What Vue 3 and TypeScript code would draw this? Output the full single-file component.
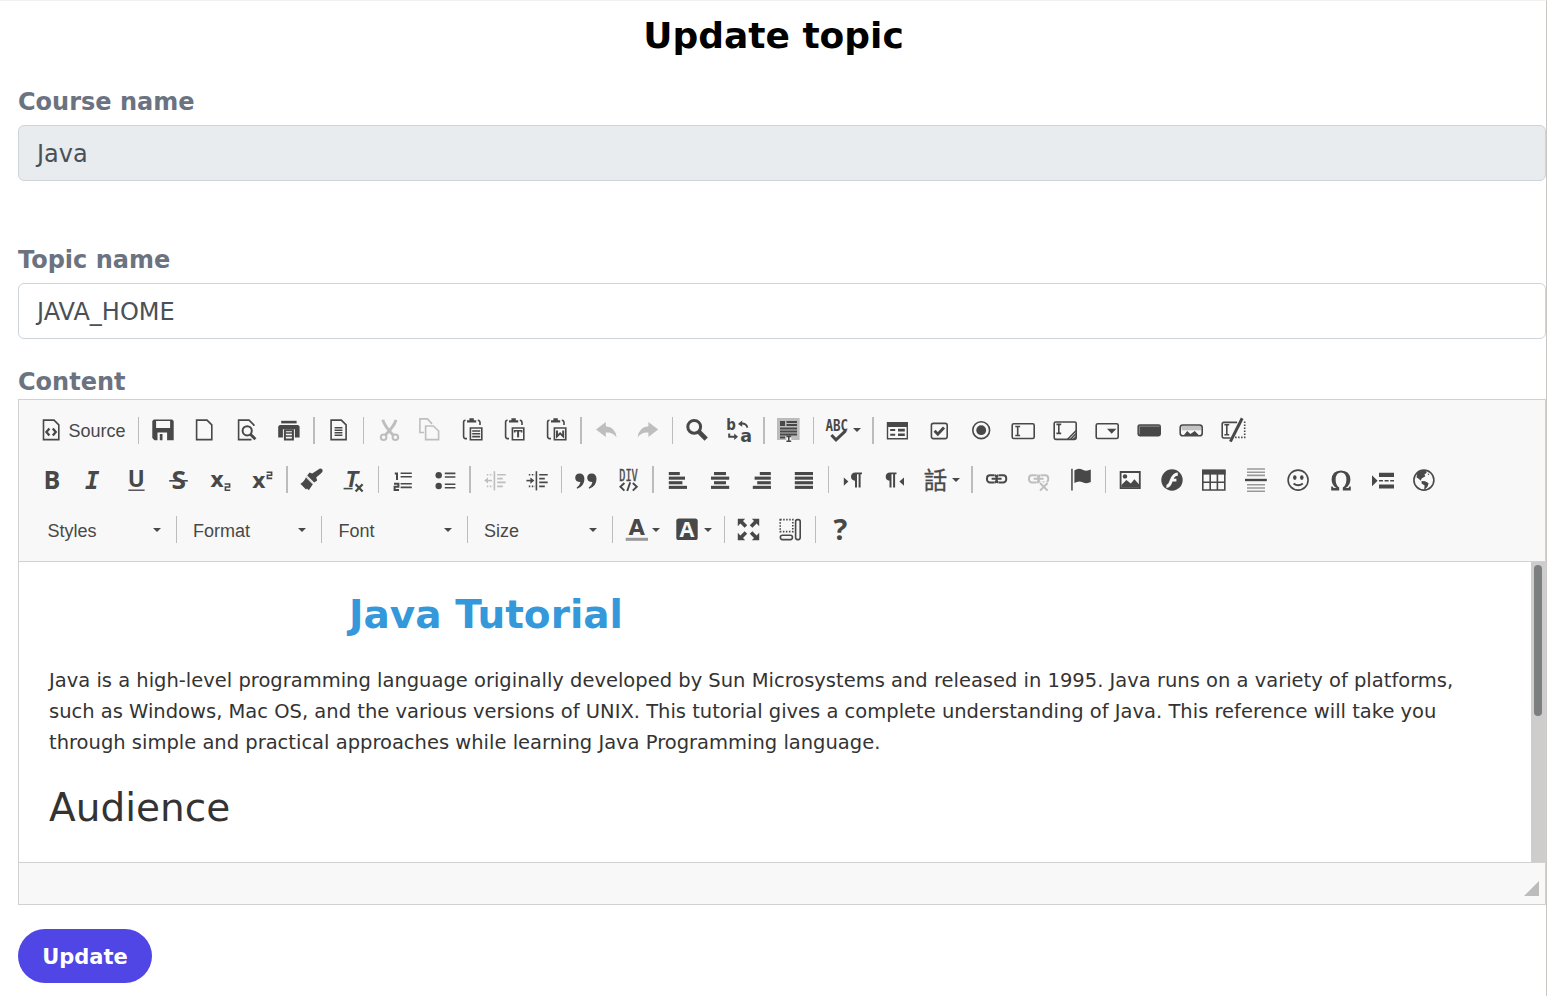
<script setup lang="ts">
import { ref } from 'vue'

interface ToolItem {
  kind: 'button' | 'menu' | 'sep' | 'combo' | 'source'
  icon?: string
  label?: string
  off?: boolean
}

const docShape = '<path class="l" d="M3.5 2.1H14l4.8 4.8V21.6H3.5Z"/>'
const clip =
  '<path d="M7 2.2h2.4V.2h4.4v2h2.4V4.4H7Z"/><path class="l" d="M5.6 2.2Q3.6 2.2 3.6 4.2V18.6Q3.6 20.6 5.6 20.6H7M17.8 2.2Q20 2.4 20 4.6V7"/><path class="l" d="M10.4 10H21.8V21.7H10.4Z"/>'
const linkShape =
  '<path class="l w2" d="M9.5 7.2H5a3 3 0 0 0-3 3v1.2a3 3 0 0 0 3 3H9.5M13.8 7.2h4.4a3 3 0 0 1 3 3v1.2a3 3 0 0 1-3 3h-4.4M6.6 10.8h10M9.8 7.2q2 .4 1.8 3.6M9.8 14.4q2-.4 1.8-3.6M13.4 7.2q-2 .4-1.8 3.6M13.4 14.4q-2-.4-1.8-3.6"/>'
const ibeam = (x: number, y: number, h: number): string =>
  `<path class="l" d="M${x - 2.4} ${y}h4.8M${x} ${y}v${h}M${x - 2.4} ${y + h}h4.8"/>`
const bars = (rows: [number, number][]): string =>
  rows.map(([x, w], i) => `<rect x="${x}" y="${4 + i * 4.6}" width="${w}" height="3.1"/>`).join('')
const indentShape =
  '<path class="l" d="M11.4 3.2V22.4"/><path class="l" d="M14.2 6.8h8.5M14.2 10.6h5.6M14.2 14.4h8.5M14.2 18.4h5.6" /><path class="l" stroke-dasharray="1.5 1.5" d="M3.8 6.8H10M3.8 18.4H10"/>'

const icons: Record<string, string> = {
  source: docShape + '<path class="l" style="stroke-width:2.3" d="M9.4 10.4 6.4 14l3 3.6M12.8 10.4l3 3.6-3 3.6"/>',
  save: '<path fill-rule="evenodd" d="M2.8 1.4H21.2L22.7 3V22.2H3.5L1.3 20V3ZM5.1 3V10H19.1V3ZM6.5 14.6V22.2H8.8V16H11.5v6.2h4.6V14.6Z"/>',
  newpage: '<path class="l" d="M3.6 2.1H14l4.8 4.8V21.6H3.6Z"/>',
  preview:
    '<path class="l" d="M16.5 21.6H3.6V2.1H14l4.8 4.8V8"/><circle class="l w2" cx="12.2" cy="12.8" r="4.6"/><path class="l w3" d="m15.4 16.2 5 5"/>',
  print:
    '<path d="M4.2 2.8H19.6V5.4H4.2Z"/><path fill-rule="evenodd" d="M2.7 7H21.1l1.5 1.5V19.6H17.9V11.2H5.9v8.4H1.2V8.5Z"/><path class="l w2" d="M7.9 12.2h8v9.2h-8Z"/><path class="l" d="M8.4 15h7M8.4 18h7"/>',
  templates:
    '<path class="l" d="M4.1 2.1h10.2l4.8 4.8V21.6H4.1Z"/><path class="l" d="M7.6 9.8h7.8M7.6 12.2h7.8M7.6 14.8h7.8M7.6 17.3h7.8"/>',
  cut: '<path class="l w3" d="M6.8 1.8Q8 7.5 17 17M20 1.8Q18.6 7.5 9.4 17"/><circle class="l w2" cx="7.6" cy="19.2" r="2.8"/><circle class="l w2" cx="19.4" cy="19.2" r="2.8"/>',
  copy: '<path class="l" d="M6 14.5H1.9V.9H9.4l4.6 5"/><path class="l" d="M7.6 8H15.4l5.2 5v8.6H7.6Z"/>',
  paste: clip + '<path class="l" d="M12.2 13h8M12.2 15.8h8M12.2 18.6h8"/>',
  pastetext: clip + '<path class="l" d="M12.6 14.4v-1.6h7v1.6"/><path class="l w2" d="M16.1 12.8v6.6"/>',
  pasteword: clip + '<path class="l w2" d="M13 12.4v6l3.1-3 3.1 3v-6"/>',
  undo: '<path d="M2 11.6 11.8 4V8.3Q21.5 9 22.6 19.6 18.5 13.8 11.8 14.6V19Z"/>',
  redo: '<path d="M22.2 11.6 12.4 4V8.3Q2.7 9 1.6 19.6 5.7 13.8 12.4 14.6V19Z"/>',
  find: '<circle class="l" style="stroke-width:3" cx="9.2" cy="8.8" r="6.4"/><path class="l" style="stroke-width:4.6" d="m13.8 13.6 7.4 7.6"/>',
  replace:
    '<text class="dj b" x="-.8" y="12" font-size="15.5" textLength="9.6" lengthAdjust="spacingAndGlyphs">b</text><text class="dj b" x="13.2" y="23.6" font-size="17.5">a</text><path class="l w2" d="M12.8 5.8Q19.4 4.4 20.4 9.6M2.2 15.4v3.4h7"/><path d="m11 6 4.2-3.4v6.2ZM11 18.8 7.2 15.6v6.4Z"/>',
  selectall:
    '<rect width="22.6" height="22" fill="#bcbcbc"/><path class="l w2" d="M9.5 4h10.5M9.5 7h10.5M3 10.4h17M3 13.4h17M3 16.4h17M3 19.6h5"/><path d="M3 3h5v5H3Z"/><path stroke="#f8f8f8" stroke-width="5" d="M11.8 18v6"/>' +
    ibeam(11.8, 18.4, 4.8),
  spell:
    '<text class="mono b" x="-.6" y="13.3" font-size="15" textLength="22.6" lengthAdjust="spacingAndGlyphs">ABC</text><path class="l" style="stroke-width:3" d="m5.4 17 4.6 4.8L19.8 12.6"/>',
  form: '<path fill-rule="evenodd" d="M.8 4H22V21.4H.8ZM2.2 9V20H20.6V9Z"/><path class="l w2" d="M4.2 12h5M4.2 16.8h5"/><path d="M12 10.8h6.8v2.6H12ZM12 15.4h6.8V18H12Z"/>',
  checkbox:
    '<rect class="l" x="3.4" y="5.4" width="15.8" height="15.2" rx="2"/><path class="l w3" d="m6.6 12.8 3.2 3.4 6.2-6.8"/>',
  radio: '<circle class="l" cx="11.2" cy="12.2" r="8.4"/><circle cx="11.2" cy="12.2" r="4.9"/>',
  textfield: '<rect class="l" x=".2" y="5.7" width="22" height="14.8" rx="1.6"/>' + ibeam(5.7, 8.5, 9),
  textarea:
    '<rect class="l" x=".2" y="4" width="22" height="17.4" rx="1.6"/>' +
    ibeam(4.8, 6.4, 9) +
    '<path class="l" d="m13.6 21.2 8.4-8.4M16.6 21.2l5.4-5.4M19.6 21.2l2.4-2.4"/>',
  select: '<rect class="l" x=".2" y="5.7" width="22" height="14.8" rx="1.6"/><path d="M11 10.8h9.4l-4.7 5Z"/>',
  formbutton:
    '<rect x="-.6" y="6.2" width="23.6" height="12.2" rx="2.4"/><path stroke="#8a8a8a" fill="none" d="M1.4 16.4V8.2H21.6"/>',
  imagebutton:
    '<path fill="#c4c4c4" d="M1.6 8h19.6v4.4H1.6Z"/><rect class="l" x=".2" y="7" width="22" height="10.8" rx="2.6"/><path d="m3.6 17.6 3.6-4.6 3.2 3 4.4-3 4.4 4.6Z"/>',
  hidden:
    '<path class="l" d="M15.1 4.4H1.8q-1.6 0-1.6 1.6V18.4q0 1.6 1.6 1.6H8.6"/>' +
    ibeam(4.8, 6.8, 10) +
    '<path class="l" style="stroke-width:3" d="M20.2.2 8.4 23.6"/><path class="l" stroke-dasharray="1.5 1.5" d="M13.1 19.4h9.6V3.4"/>',
  bold: '<text class="os b" x="3.6" y="21.2" font-size="25">B</text>',
  italic: '<text class="mono b i" x="3.1" y="21" font-size="24">I</text>',
  underline: '<text class="os b" x="3.8" y="19" font-size="22.5">U</text><path d="M4.4 21.5H20.6v1.4H4.4Z"/>',
  strike: '<text class="os b" x="5.6" y="21" font-size="24.5" textLength="14.5" lengthAdjust="spacingAndGlyphs">S</text><path d="M3.2 12H21.8v1.6H3.2Z"/>',
  sub: '<text class="dj b" x="2.2" y="18.8" font-size="22" textLength="13.6" lengthAdjust="spacingAndGlyphs">x</text><path class="l" d="M16.6 16h5v3h-4.2v3.2h4.8"/>',
  sup: '<text class="dj b" x="2" y="20" font-size="22" textLength="13.6" lengthAdjust="spacingAndGlyphs">x</text><path class="l" d="M16.6 4.2h5v3h-4.2v3.2h4.8"/>',
  brush:
    '<path d="M18.4 1.6q2-2.2 4 0 1 1.8-1 3.4l-5.2 4.4 1 3-3 2.2-7-7 2.4-3 2.6 1Z"/><path d="m6.2 8.6 7 7.2-4.4 6.4L7 20.4l-1 1.2L.4 15.8Q4.6 13.6 6.2 8.6Z"/><path d="m5.6 8.8 8 8" stroke="#f8f8f8"/>',
  clear:
    '<text class="mono b i" x="3.2" y="18.6" font-size="21.5" textLength="14" lengthAdjust="spacingAndGlyphs">T</text><path d="M1.6 19.8h9v1.6H1.6Z"/><path class="l" style="stroke-width:2.2" d="m13.6 16.2 7 7.2M20.6 16.2l-7 7.2"/>',
  numbered:
    '<path class="l w2" d="M3.8 5.4H6V12M3 15.8h4.4v3H3.6v3.2h4.4"/><path class="l" d="M9.6 5.2H20.8M9.6 8.8H20.8M9.6 15.8H20.8M9.6 19.4H20.8"/>',
  bulleted:
    '<circle cx="5.7" cy="7.3" r="3.2"/><circle cx="5.7" cy="18" r="3.2"/><path class="l" d="M11.8 5.4H22.4M11.8 9H22.4M11.8 16.2H22.4M11.8 19.8H22.4"/>',
  outdent: indentShape + '<path class="l" d="M3 12.6h6"/><path d="M1.2 12.6 5 9.6v6Z"/>',
  indent: indentShape + '<path class="l" d="M1.4 12.6h6"/><path d="M9.4 12.6 5.4 9.4v6.4Z"/>',
  quote:
    '<path d="M5.6 5.4q4.8 0 4.8 5.6 0 7-7.2 9.8l-.6-1q3.4-2.2 3.8-5.8Q1.2 14 1.2 9.8q0-4.2 4.4-4.4ZM17.6 5.4q4.9 0 4.9 5.6 0 7-7.3 9.8l-.6-1q3.4-2.2 3.8-5.8-5.2 0-5.2-4.2 0-4.2 4.4-4.4Z"/>',
  div: '<text class="mono" x="3.2" y="12.8" font-size="15.5" stroke="#484848" stroke-width=".4" textLength="18.6" lengthAdjust="spacingAndGlyphs">DIV</text><path class="l" style="stroke-width:1.9" d="m8.4 15-4 3.8 4 3.8M16.8 15l4 3.8-4 3.8M14.2 14.4l-3 8.6"/>',
  left: bars([[2.8, 11], [2.8, 16.2], [2.8, 13.6], [2.8, 18.2]]),
  center: bars([[6, 12], [3, 18.2], [6, 12], [3, 18.2]]),
  right: bars([[9.8, 11], [4.6, 16.2], [7.2, 13.6], [2.8, 18.2]]),
  justify: bars([[2.8, 18.2], [2.8, 18.2], [2.8, 18.2], [2.8, 18.2]]),
  ltr: '<path d="M2.8 9.4 7.4 13.6 2.8 17.8Z"/><path d="M14.4 4.6H21V6.2H19.6V19.6H17.6V6.2H16V19.6H14V12.8Q10 12.4 10 8.8 10 4.8 14.4 4.6Z"/>',
  rtl: '<path d="M21 9.4 16.4 13.6 21 17.8Z"/><path d="M7.1 4.6h6.4V6.2h-1.4V19.6h-2V6.2H8.5V19.6h-2V12.8Q2.7 12.4 2.7 8.8 2.7 4.8 7.1 4.6Z"/>',
  lang: '<text class="cjk" x="-1.2" y="20.6" font-size="23.5" stroke="#484848" stroke-width=".3">話</text>',
  link: linkShape,
  unlink:
    linkShape +
    '<path stroke="#f8f8f8" stroke-width="5" d="m12.6 14.4 8 8M20.6 14.4l-8 8"/><path class="l w2" d="m13 15 7.6 7.6M20.6 15 13 22.6"/>',
  flag: '<path d="M2.2.8h1.5V22.4H2.2ZM5.4 2.4q4-2.8 8.2-.6 4 1.8 8.2-.2V14q-4 2.2-8.2.2-4-1.8-8.2.8Z"/>',
  image:
    '<path class="l" style="stroke-width:1.8" d="M2.6 4H21.8V20.2H2.6Z"/><circle cx="7" cy="8.4" r="2.2"/><path d="M3.4 19.4V17l5-5 4.4 3.6 3.6-4.4 5 5.6v2.6Z"/>',
  flash:
    '<circle cx="12" cy="12" r="10.7"/><path fill="#f8f8f8" d="M17.8 4.5v3.2q-3.2 0-4 3h2.6v2.8h-3.8q-1.8 6-6.2 6.6v-3.2q2-.4 3.4-4.8Q12.4 4.9 17.8 4.5Z"/>',
  table:
    '<path d="M0 1.8H23.6V6.6H0Z"/><path class="l" d="M.8 2.4H22.8V22H.8ZM8.2 6v16M15.4 6v16M.8 14.2h22"/>',
  hr: '<path d="M1 10.8H22.8v2.4H1Z"/><path class="l" style="stroke:#999" d="M3 1H21M3 4.2H21M3 7.4H21M3 16.8H21M3 20H21M3 23.2H21"/>',
  smiley:
    '<circle class="l" cx="12.1" cy="12.1" r="10"/><ellipse cx="8.8" cy="9.6" rx="1.8" ry="2.4"/><ellipse cx="15.8" cy="9.6" rx="1.8" ry="2.4"/><path class="l w2" d="M7.6 15.4q4.6 3.8 9.2 0"/>',
  omega:
    '<path d="M3.2 22.6V18.4H4.6Q5 20 6.4 20H8.4Q3.6 17 3.6 11.4 4 2.6 13 2.4 22 2.6 22.4 11.4 22.4 17 17.6 20h2q1.4 0 1.8-1.6h1.4v4.2H14.8V19.6q3.6-2.4 3.6-8.2Q18.2 4.6 13 4.4 7.8 4.6 7.6 11.4q0 5.8 3.6 8.2v3Z"/>',
  pagebreak:
    '<path d="M2 7.2 7.6 12.7 2 18.2ZM9 4.8H24V9H9ZM9 16.4H24v4.2H9Z"/><path class="l" stroke-dasharray="4 1.6" d="M9 12.7h15"/>',
  globe:
    '<circle class="l" cx="11.9" cy="12.1" r="10"/><path d="M5 5.6Q8 2.2 13.4 2.6l1.4 2.2-2.4 1.8 1 1.6-3.8 2.4-.8 2.2-2.4-2.4L4.6 9.6ZM15.6 5.2l1.8 1-1.2 1ZM9.6 13l3.6.2 3.4 2-1 3.4-2.6 3-.8-.4.4-3.6-3-2.2Z"/>',
  color:
    '<text class="dj b" x="2.6" y="17.2" font-size="20.5" textLength="16.4" lengthAdjust="spacingAndGlyphs">A</text><path fill="#999" d="M-.3 19.8H22V22.8H-.3Z"/>',
  bgcolor:
    '<rect x="-1.7" y=".6" width="21.4" height="21.4" rx="2.6"/><text class="os b" x="1.6" y="18.6" font-size="21.5" style="fill:#f8f8f8">A</text>',
  maximize:
    '<path d="M.8.8H8.2L6 3l4.2 4.2-2.6 2.6-4.2-4.2L.8 8.2ZM22.2.8H14.8L17 3l-4.2 4.2 2.6 2.6 4.2-4.2 2.6 2.6ZM.8 22.2H8.2L6 20l4.2-4.2-2.6-2.6-4.2 4.2-2.6-2.6ZM22.2 22.2H14.8L17 20l-4.2-4.2 2.6-2.6 4.2 4.2 2.6-2.6Z"/>',
  blocks:
    '<path class="l" stroke-dasharray="1.5 1.5" d="M1.2 1.6H13.8V13.6H1.2Z"/><rect class="l" x="16.6" y="1.6" width="4.6" height="20" rx="2"/><rect class="l" x="1.4" y="17.2" width="12" height="4.4" rx="2"/>',
  about: '<text class="os b" x="4.4" y="22" font-size="29">?</text>'
}

const sep: ToolItem = { kind: 'sep' }
const buttons = (...names: string[]): ToolItem[] => names.map((icon) => ({ kind: 'button', icon }))
const faded = (...names: string[]): ToolItem[] => names.map((icon) => ({ kind: 'button', icon, off: true }))
const menu = (icon: string): ToolItem => ({ kind: 'menu', icon })
const combo = (label: string): ToolItem => ({ kind: 'combo', label })

const rows: ToolItem[][] = [
  [
    { kind: 'source', icon: 'source', label: 'Source' }, sep,
    ...buttons('save', 'newpage', 'preview', 'print'), sep,
    ...buttons('templates'), sep,
    ...faded('cut', 'copy'), ...buttons('paste', 'pastetext', 'pasteword'), sep,
    ...faded('undo', 'redo'), sep,
    ...buttons('find', 'replace'), sep,
    ...buttons('selectall'), sep,
    menu('spell'), sep,
    ...buttons('form', 'checkbox', 'radio', 'textfield', 'textarea', 'select', 'formbutton', 'imagebutton', 'hidden')
  ],
  [
    ...buttons('bold', 'italic', 'underline', 'strike', 'sub', 'sup'), sep,
    ...buttons('brush', 'clear'), sep,
    ...buttons('numbered', 'bulleted'), sep,
    ...faded('outdent'), ...buttons('indent'), sep,
    ...buttons('quote', 'div'), sep,
    ...buttons('left', 'center', 'right', 'justify'), sep,
    ...buttons('ltr', 'rtl'), menu('lang'), sep,
    ...buttons('link'), ...faded('unlink'), ...buttons('flag'), sep,
    ...buttons('image', 'flash', 'table', 'hr', 'smiley', 'omega', 'pagebreak', 'globe')
  ],
  [
    combo('Styles'), sep, combo('Format'), sep, combo('Font'), sep, combo('Size'), sep,
    menu('color'), menu('bgcolor'), sep,
    ...buttons('maximize', 'blocks'), sep,
    ...buttons('about')
  ]
]

const course = ref('Java')
const topic = ref('JAVA_HOME')
</script>

<template>
  <main class="page">
    <h1 class="title">Update topic</h1>
    <form class="form" @submit.prevent>
      <label class="label" for="course">Course name</label>
      <input id="course" v-model="course" class="field disabled" type="text" disabled />
      <label class="label second" for="topic">Topic name</label>
      <input id="topic" v-model="topic" class="field" type="text" />
      <div class="label third">Content</div>

      <section class="editor">
        <div class="toolbar">
          <div v-for="(row, r) in rows" :key="r" class="row" :class="{ combos: r === 2 }">
            <div v-for="(item, i) in row" :key="i" :class="[item.kind, { off: item.off }]">
              <svg v-if="item.icon" class="icon" viewBox="0 0 24 24" v-html="icons[item.icon]"></svg>
              <span v-if="item.label" class="text">{{ item.label }}</span>
              <svg v-if="item.kind === 'menu' || item.kind === 'combo'" class="arrow" viewBox="0 0 8 4">
                <path d="M0 0H8L4 4Z" />
              </svg>
            </div>
          </div>
        </div>
        <div class="body">
          <article class="document">
            <h1>Java Tutorial</h1>
            <p>
              Java is a high-level programming language originally developed by Sun Microsystems and released in
              1995. Java runs on a variety of platforms, such as Windows, Mac OS, and the various versions of UNIX.
              This tutorial gives a complete understanding of Java. This reference will take you through simple and
              practical approaches while learning Java Programming language.
            </p>
            <h2>Audience</h2>
          </article>
          <div class="scroll"><div class="thumb"></div></div>
        </div>
        <div class="bottom">
          <svg class="grip" viewBox="0 0 15 15"><path d="M15 0V15H0Z" /></svg>
        </div>
      </section>

      <button class="submit" type="submit">Update</button>
    </form>
  </main>
</template>

<style>
html,
body {
  margin: 0;
  overflow: hidden;
  background: #fff;
}
</style>

<style scoped>
.page {
  box-sizing: border-box;
  width: 1547px;
  height: 996px;
  border-top: 1px solid #f1f1f1;
  border-right: 1px solid #cbc6c2;
  font-family: 'DejaVu Sans', sans-serif;
  background: #fff;
}
.title {
  margin: 0;
  padding: 14px 0 0 1px;
  height: 70px;
  box-sizing: border-box;
  text-align: center;
  font-size: 36px;
  line-height: 42px;
  color: #000;
}
.form {
  display: flex;
  flex-direction: column;
  align-items: stretch;
  padding-left: 18px;
}
.label {
  height: 36px;
  margin-top: 13px;
  margin-bottom: 5px;
  font-size: 24px;
  font-weight: 700;
  line-height: 36px;
  color: #6b7280;
}
.label.second {
  margin-top: 61px;
}
.label.third {
  margin: 25px 0 -1px;
}
.field {
  box-sizing: border-box;
  width: 100%;
  height: 56px;
  padding: 2px 14px 0;
  text-indent: 4px;
  border: 1px solid #ced4da;
  border-radius: 6px;
  font: 24px 'DejaVu Sans', sans-serif;
  color: #495057;
  background: #fff;
}
.field.disabled {
  background: #e8ecef;
}
.editor {
  box-sizing: border-box;
  height: 506px;
  border: 1px solid #d1d1d1;
}
.toolbar {
  box-sizing: border-box;
  height: 162px;
  padding: 5.74px 0 0 12.49px;
  border-bottom: 1px solid #d1d1d1;
  background: #f8f8f8;
}
.row {
  display: flex;
  align-items: center;
  height: 49.5px;
}
.row > div {
  flex: none;
}
.combos {
  padding-left: 3.5px;
}
.button,
.menu,
.source {
  box-sizing: border-box;
  display: flex;
  align-items: center;
  width: 42px;
  height: 36px;
  padding-left: 9px;
}
.menu {
  width: 52px;
}
.source {
  width: 103.5px;
}
.off {
  opacity: 0.32;
}
.sep {
  width: 1.5px;
  height: 27px;
  margin: 0 3px;
  background: #bcbcbc;
}
.combos .sep {
  width: 1px;
  margin-right: 3.5px;
}
.combo {
  box-sizing: border-box;
  display: flex;
  align-items: center;
  justify-content: space-between;
  width: 138px;
  height: 36px;
  padding: 0 12px 0 12.5px;
}
.combos .button,
.combos .menu,
.combos .combo {
  padding-top: 1.5px;
}
.icon {
  flex: none;
  width: 24px;
  height: 24px;
  overflow: visible;
  fill: #484848;
}
.icon :deep(.l) {
  fill: none;
  stroke: #484848;
  stroke-width: 1.6;
}
.icon :deep(.w2) {
  stroke-width: 2;
}
.icon :deep(.w3) {
  stroke-width: 2.9;
}
.icon :deep(.b) {
  font-weight: 700;
}
.icon :deep(.i) {
  font-style: italic;
}
.icon :deep(.os) {
  font-family: 'Open Sans', sans-serif;
}
.icon :deep(.dj) {
  font-family: 'DejaVu Sans', sans-serif;
}
.icon :deep(.mono) {
  font-family: 'DejaVu Sans Mono', monospace;
}
.icon :deep(.cjk) {
  font-family: 'Noto Sans CJK TC', sans-serif;
}
.text {
  font: 18px/24px 'Liberation Sans', Arial, sans-serif;
  color: #484848;
  padding-top: 2px;
}
.source .text {
  margin-left: 4px;
  padding-top: 1px;
}
.arrow {
  flex: none;
  width: 8px;
  height: 4px;
  fill: #484848;
}
.menu .arrow {
  margin-left: 2.5px;
}
.body {
  display: flex;
  height: 300px;
}
.document {
  box-sizing: border-box;
  flex: 1;
  padding: 0 30px;
  overflow: hidden;
  color: #333;
}
.document h1 {
  margin: 30px 0 0 300px;
  font-size: 39px;
  line-height: 46px;
  color: #3498db;
}
.document p {
  margin: 26.5px 0 0;
  font-size: 19.5px;
  line-height: 31.2px;
}
.document h2 {
  margin: 27px 0 0;
  font-size: 39px;
  font-weight: 400;
  line-height: 46px;
}
.scroll {
  box-sizing: border-box;
  flex: none;
  width: 14px;
  padding: 3px;
  background: #cdcdcd;
}
.thumb {
  width: 8px;
  height: 151px;
  border-radius: 4px;
  background: #7c7f80;
}
.bottom {
  box-sizing: border-box;
  display: flex;
  align-items: flex-end;
  justify-content: flex-end;
  height: 42px;
  padding: 0 6px 8px 0;
  border-top: 1px solid #d1d1d1;
  background: #f8f8f8;
}
.grip {
  width: 15px;
  height: 15px;
  fill: #bcbcbc;
}
.submit {
  align-self: flex-start;
  width: 134px;
  height: 54px;
  margin: 24px 0 0;
  padding: 2px 0 0;
  border: 0;
  border-radius: 27px;
  font: 700 21px 'DejaVu Sans', sans-serif;
  color: #fff;
  background: #4f46e5;
}
</style>
